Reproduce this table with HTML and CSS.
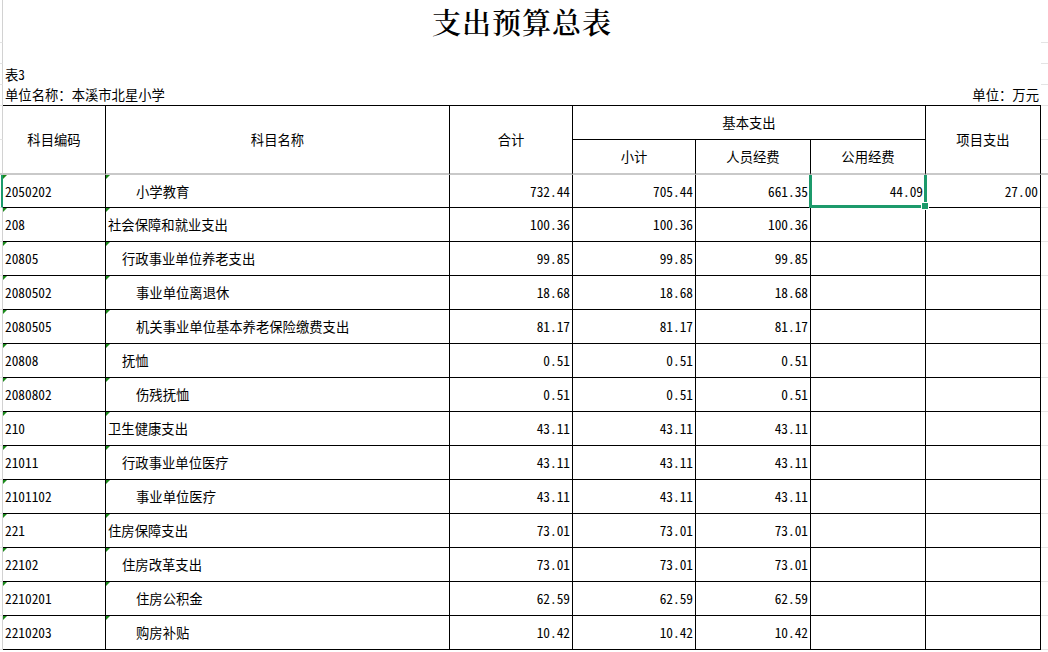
FILE: index.html
```html
<!DOCTYPE html>
<html lang="zh-CN">
<head>
<meta charset="utf-8">
<title>支出预算总表</title>
<link rel="stylesheet" href="styles.css">
</head>
<body>
<div class="sheet">
  <!-- row 1: title -->
  <div class="g"></div>
  <div class="title">支出预算总表</div>
  <div class="t"></div>
  <!-- row 2: blank -->
  <div class="g"></div>
  <div class="blank"></div>
  <div class="t"></div>
  <!-- row 3 -->
  <div class="g"></div>
  <div class="intro">表3</div>
  <div class="t"></div>
  <!-- row 4 -->
  <div class="g"></div>
  <div class="intro unit"><span>单位名称：本溪市北星小学</span><span>单位：万元</span></div>
  <div class="t"></div>

  <!-- header rows -->
  <div class="g"></div>
  <div class="h span2">科目编码</div>
  <div class="h span2">科目名称</div>
  <div class="h span2">合计</div>
  <div class="h group">基本支出</div>
  <div class="h span2">项目支出</div>
  <div class="t"></div>
  <div class="g freeze"></div>
  <div class="h sub">小计</div>
  <div class="h sub">人员经费</div>
  <div class="h sub">公用经费</div>
  <div class="t freeze"></div>

  <!-- data -->
  <div class="g active"></div>
  <div class="c code tri">2050202</div>
  <div class="c name l3 tri">小学教育</div>
  <div class="c num">732.44</div>
  <div class="c num">705.44</div>
  <div class="c num">661.35</div>
  <div class="c num selected">44.09</div>
  <div class="c num">27.00</div>
  <div class="t"></div>

  <div class="g"></div>
  <div class="c code tri">208</div>
  <div class="c name l1 tri">社会保障和就业支出</div>
  <div class="c num">100.36</div>
  <div class="c num">100.36</div>
  <div class="c num">100.36</div>
  <div class="c num"></div>
  <div class="c num"></div>
  <div class="t"></div>

  <div class="g"></div>
  <div class="c code tri">20805</div>
  <div class="c name l2 tri">行政事业单位养老支出</div>
  <div class="c num">99.85</div>
  <div class="c num">99.85</div>
  <div class="c num">99.85</div>
  <div class="c num"></div>
  <div class="c num"></div>
  <div class="t"></div>

  <div class="g"></div>
  <div class="c code tri">2080502</div>
  <div class="c name l3 tri">事业单位离退休</div>
  <div class="c num">18.68</div>
  <div class="c num">18.68</div>
  <div class="c num">18.68</div>
  <div class="c num"></div>
  <div class="c num"></div>
  <div class="t"></div>

  <div class="g"></div>
  <div class="c code tri">2080505</div>
  <div class="c name l3 tri">机关事业单位基本养老保险缴费支出</div>
  <div class="c num">81.17</div>
  <div class="c num">81.17</div>
  <div class="c num">81.17</div>
  <div class="c num"></div>
  <div class="c num"></div>
  <div class="t"></div>

  <div class="g"></div>
  <div class="c code tri">20808</div>
  <div class="c name l2 tri">抚恤</div>
  <div class="c num">0.51</div>
  <div class="c num">0.51</div>
  <div class="c num">0.51</div>
  <div class="c num"></div>
  <div class="c num"></div>
  <div class="t"></div>

  <div class="g"></div>
  <div class="c code tri">2080802</div>
  <div class="c name l3 tri">伤残抚恤</div>
  <div class="c num">0.51</div>
  <div class="c num">0.51</div>
  <div class="c num">0.51</div>
  <div class="c num"></div>
  <div class="c num"></div>
  <div class="t"></div>

  <div class="g"></div>
  <div class="c code tri">210</div>
  <div class="c name l1 tri">卫生健康支出</div>
  <div class="c num">43.11</div>
  <div class="c num">43.11</div>
  <div class="c num">43.11</div>
  <div class="c num"></div>
  <div class="c num"></div>
  <div class="t"></div>

  <div class="g"></div>
  <div class="c code tri">21011</div>
  <div class="c name l2 tri">行政事业单位医疗</div>
  <div class="c num">43.11</div>
  <div class="c num">43.11</div>
  <div class="c num">43.11</div>
  <div class="c num"></div>
  <div class="c num"></div>
  <div class="t"></div>

  <div class="g"></div>
  <div class="c code tri">2101102</div>
  <div class="c name l3 tri">事业单位医疗</div>
  <div class="c num">43.11</div>
  <div class="c num">43.11</div>
  <div class="c num">43.11</div>
  <div class="c num"></div>
  <div class="c num"></div>
  <div class="t"></div>

  <div class="g"></div>
  <div class="c code tri">221</div>
  <div class="c name l1 tri">住房保障支出</div>
  <div class="c num">73.01</div>
  <div class="c num">73.01</div>
  <div class="c num">73.01</div>
  <div class="c num"></div>
  <div class="c num"></div>
  <div class="t"></div>

  <div class="g"></div>
  <div class="c code tri">22102</div>
  <div class="c name l2 tri">住房改革支出</div>
  <div class="c num">73.01</div>
  <div class="c num">73.01</div>
  <div class="c num">73.01</div>
  <div class="c num"></div>
  <div class="c num"></div>
  <div class="t"></div>

  <div class="g"></div>
  <div class="c code tri">2210201</div>
  <div class="c name l3 tri">住房公积金</div>
  <div class="c num">62.59</div>
  <div class="c num">62.59</div>
  <div class="c num">62.59</div>
  <div class="c num"></div>
  <div class="c num"></div>
  <div class="t"></div>

  <div class="g"></div>
  <div class="c code tri">2210203</div>
  <div class="c name l3 tri">购房补贴</div>
  <div class="c num">10.42</div>
  <div class="c num">10.42</div>
  <div class="c num">10.42</div>
  <div class="c num"></div>
  <div class="c num"></div>
  <div class="t"></div>
</div>
</body>
</html>
```

FILE: styles.css
```css
* {
  box-sizing: border-box;
}

html, body {
  margin: 0;
  padding: 0;
  background: #ffffff;
}

body {
  width: 1048px;
  height: 652px;
  overflow: hidden;
  font-family: "Noto Sans Mono CJK SC", "Noto Sans CJK SC", "Liberation Mono", monospace;
  font-size: 13.33px;
  color: #000000;
}

.sheet {
  display: grid;
  grid-template-columns: 3px 103px 344px 123px 123px 115px 115px 115px 7px;
  grid-template-rows: 43px 21px 21px 21px 34px 35px 33px repeat(13, 34px);
}

/* edge gutters with faint gridlines */
.g {
  border-right: 1px solid #d2d2d2;
  border-bottom: 1px solid #e4e4e4;
}

.t {
  border-bottom: 1px solid #e4e4e4;
}

.g.freeze,
.t.freeze {
  border-bottom: 2px solid #c9c9c9;
}

.g.active {
  border-right: 2px solid #1c9a6b;
}

/* title area */
.title {
  grid-column: 2 / 9;
  display: flex;
  align-items: center;
  justify-content: center;
  font-family: "Noto Serif CJK SC", "Noto Sans CJK SC", serif;
  font-size: 29px;
  font-weight: 600;
  letter-spacing: 1px;
  padding-bottom: 1px;
}

.blank {
  grid-column: 2 / 9;
}

.intro {
  grid-column: 2 / 9;
  display: flex;
  align-items: center;
  padding: 0 2px;
  line-height: 1;
}

.unit {
  justify-content: space-between;
  border-bottom: 1px solid #000000;
}

/* header */
.h {
  display: flex;
  align-items: center;
  justify-content: center;
  border-right: 1px solid #000000;
  border-bottom: 1px solid #000000;
}

.h.span2 {
  grid-row: span 2;
  border-bottom: 2px solid #c9c9c9;
}

.h.group {
  grid-column: span 3;
}

.h.sub {
  border-bottom: 2px solid #c9c9c9;
}

/* data cells */
.c {
  position: relative;
  display: flex;
  align-items: center;
  white-space: nowrap;
  border-right: 1px solid #000000;
  border-bottom: 1px solid #000000;
  padding: 0 2px;
}

.num {
  justify-content: flex-end;
}

.name.l1 { padding-left: 2px; }
.name.l2 { padding-left: 16px; }
.name.l3 { padding-left: 30px; }

.tri::before {
  content: "";
  position: absolute;
  top: 0;
  left: 0;
  width: 0;
  height: 0;
  border-top: 4px solid #1a8a1a;
  border-right: 4px solid transparent;
}

.selected::after {
  content: "";
  position: absolute;
  top: 0;
  left: -2px;
  right: -2px;
  bottom: -1px;
  border: 3px solid #1c9a6b;
  border-top: 0;
}

.selected::before {
  content: "";
  position: absolute;
  right: -4px;
  bottom: -3px;
  width: 6px;
  height: 6px;
  background: #1c9a6b;
  border: 1px solid #ffffff;
  z-index: 1;
}
```
